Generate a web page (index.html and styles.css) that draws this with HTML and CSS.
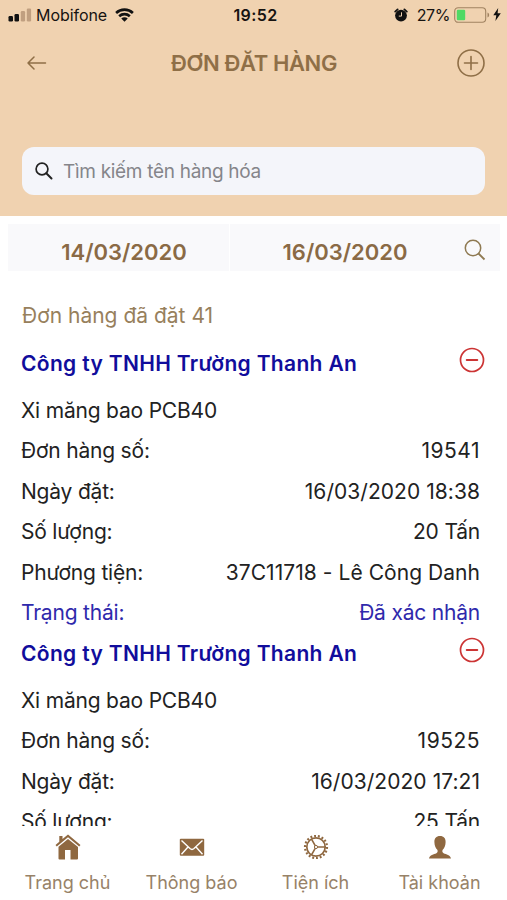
FILE: index.html
```
<!DOCTYPE html>
<html lang="vi">
<head>
    <meta charset="UTF-8">
    <meta name="viewport" content="width=device-width, initial-scale=1.0">
    <title>Đơn đặt hàng</title>
    <link rel="stylesheet" href="styles.css">
</head>
<body>
    <header class="header">
        <div class="statusBar">
            <div class="statusLeft">
                <svg class="signal" width="24" height="14" viewBox="0 0 24 14">
                    <rect x="0.5" y="8" width="4.5" height="5.5" rx="1.2" fill="#111"/>
                    <rect x="6.5" y="6" width="4.5" height="7.5" rx="1.2" fill="#111"/>
                    <rect x="12.8" y="3" width="4.3" height="10.5" rx="1.2" fill="#c09f80"/>
                    <rect x="18.8" y="0.5" width="4.3" height="13" rx="1.2" fill="#c09f80"/>
                </svg>
                <span class="carrier">Mobifone</span>
                <svg class="wifi" width="19" height="14" viewBox="0 0 20 15" fill="none" stroke="#111" stroke-width="2.8">
                    <path d="M1 5.3a13 13 0 0 1 18 0"/>
                    <path d="M4.3 8.8a8.3 8.3 0 0 1 11.4 0"/>
                    <path d="M10 14.8L6.5 11.3a5 5 0 0 1 7 0z" fill="#111" stroke="none"/>
                </svg>
            </div>
            <div class="clock">19:52</div>
            <div class="statusRight">
                <svg width="14" height="14" viewBox="0 0 14 14">
                    <circle cx="7" cy="7.6" r="5.9" fill="#111"/>
                    <path d="M1.2 3.6L3.6 1.4M12.8 3.6L10.4 1.4" stroke="#111" stroke-width="1.8" stroke-linecap="round"/>
                    <path d="M7.5 4.3v3.8H4.8" fill="none" stroke="#f0d2b0" stroke-width="1"/>
                </svg>
                <span class="percent">27%</span>
                <svg class="battery" width="36" height="16" viewBox="0 0 36 16">
                    <rect x="0.7" y="0.7" width="31" height="14.6" rx="3.5" fill="none" stroke="#a08260" stroke-width="1.1"/>
                    <rect x="2.8" y="2.8" width="8.4" height="10.4" rx="1.2" fill="#4fd964"/>
                    <path d="M33.5 5.5c2.2 1 2.2 4 0 5z" fill="#a08260"/>
                </svg>
                <svg width="8" height="13" viewBox="0 0 8 13"><path d="M5.2 0L0.3 7.2h3L2.4 13 7.8 5.3H4.6z" fill="#111"/></svg>
            </div>
        </div>
        <div class="navBar">
            <svg class="back" width="20" height="14" viewBox="0 0 20 14" fill="none" stroke="#8f6f47" stroke-width="1.5" stroke-linecap="round" stroke-linejoin="round">
                <path d="M18.5 7H1M7 1L1 7l6 6"/>
            </svg>
            <h1>ĐƠN ĐĂT HÀNG</h1>
            <svg class="add" width="28" height="28" viewBox="0 0 28 28" fill="none" stroke="#8f6f47" stroke-width="1.6">
                <circle cx="14" cy="14" r="13"/>
                <path d="M14 7.5v13M7.5 14h13" stroke-linecap="round"/>
            </svg>
        </div>
        <div class="searchBox">
            <svg width="18" height="18" viewBox="0 0 18 18" fill="none" stroke="#222" stroke-width="1.7">
                <circle cx="7" cy="7" r="5.9"/>
                <path d="M11.3 11.3l5.2 5.2" stroke-width="2" stroke-linecap="round"/>
            </svg>
            <span>Tìm kiếm tên hàng hóa</span>
        </div>
    </header>

    <div class="dateBar">
        <div class="date">14/03/2020</div>
        <div class="date">16/03/2020</div>
        <div class="dateSearch">
            <svg width="22" height="22" viewBox="0 0 22 22" fill="none" stroke="#8f7a52" stroke-width="1.5">
                <circle cx="9" cy="9" r="7.7"/>
                <path d="M14.5 14.5l6 6" stroke-width="1.8"/>
            </svg>
        </div>
    </div>

    <main class="orders">
        <div class="total">Đơn hàng đã đặt 41</div>

        <section class="order">
            <div class="row company">
                <h2>Công ty TNHH Trường Thanh An</h2>
                <svg class="remove" width="26" height="26" viewBox="0 0 26 26" fill="none" stroke="#cc3434" stroke-width="1.7">
                    <circle cx="13" cy="13" r="11.5"/>
                    <path d="M7.7 13h10.6" stroke-width="1.9" stroke-linecap="round"/>
                </svg>
            </div>
            <div class="row"><span>Xi măng bao PCB40</span></div>
            <div class="row"><span>Đơn hàng số:</span><span class="number">19541</span></div>
            <div class="row"><span>Ngày đặt:</span><span class="value">16/03/2020 18:38</span></div>
            <div class="row"><span>Số lượng:</span><span>20 Tấn</span></div>
            <div class="row"><span>Phương tiện:</span><span class="value">37C11718 - Lê Công Danh</span></div>
            <div class="row status"><span>Trạng thái:</span><span>Đã xác nhận</span></div>
        </section>

        <section class="order">
            <div class="row company">
                <h2>Công ty TNHH Trường Thanh An</h2>
                <svg class="remove" width="26" height="26" viewBox="0 0 26 26" fill="none" stroke="#cc3434" stroke-width="1.7">
                    <circle cx="13" cy="13" r="11.5"/>
                    <path d="M7.7 13h10.6" stroke-width="1.9" stroke-linecap="round"/>
                </svg>
            </div>
            <div class="row"><span>Xi măng bao PCB40</span></div>
            <div class="row"><span>Đơn hàng số:</span><span class="number">19525</span></div>
            <div class="row"><span>Ngày đặt:</span><span class="value">16/03/2020 17:21</span></div>
            <div class="row"><span>Số lượng:</span><span>25 Tấn</span></div>
        </section>
    </main>

    <nav class="tabBar">
        <div class="tab">
            <svg width="26" height="26" viewBox="0 0 26 26" fill="#8f6840">
                <path d="M13 0.5L7.5 5V2H4.3v5.7L0.5 11l1.3 1.5L13 3.3l11.2 9.2 1.3-1.5z"/>
                <path d="M13 5L3.500 12.800V24.500q0 1 1 1H10V16h5.500v9.500H22q1 0 1-1V13z"/>
            </svg>
            <span>Trang chủ</span>
        </div>
        <div class="tab">
            <svg width="26" height="26" viewBox="0 0 26 26">
                <rect x="0.8" y="4.8" width="24.4" height="17" rx="1" fill="#8f6840"/>
                <path d="M2.5 6.5L11 14.6q2 1.8 4 0L23.5 6.5M2.5 20.2L9 13M23.5 20.2L17 13" fill="none" stroke="#fff" stroke-width="1.4"/>
            </svg>
            <span>Thông báo</span>
        </div>
        <div class="tab">
            <svg width="26" height="26" viewBox="0 0 26 26" fill="none" stroke="#8f6840">
                <circle cx="13" cy="13" r="9.2" stroke-width="1.7"/>
                <circle cx="13" cy="13" r="11" stroke-width="2.2" pathLength="72" stroke-dasharray="2 2"/>
                <circle cx="13" cy="13" r="1.6" stroke-width="1"/>
                <path d="M14.5 13H22M12.2 11.7L8.5 5.2M12.2 14.3L8.5 20.8" stroke-width="1.6"/>
            </svg>
            <span>Tiện ích</span>
        </div>
        <div class="tab">
            <svg width="26" height="26" viewBox="0 0 26 26" fill="#8f6840">
                <path d="M13 2c3.8 0 5.8 2.5 5.6 6.2-.1 3.6-1.300 5.800-2.900 7.600-.7 1.400-.4 2.800.9 3.400 2.700 1.200 6.600 1.500 7.400 5.300H2c.8-3.800 4.700-4.100 7.400-5.300 1.300-.6 1.600-2 .9-3.400C8.700 14 7.500 11.800 7.400 8.200 7.200 4.500 9.200 2 13 2z"/>
            </svg>
            <span>Tài khoản</span>
        </div>
    </nav>
</body>
</html>
```
FILE: styles.css
```
* {
  box-sizing: border-box;
}
body {
  margin: 0;
  height: 900px;
  display: flex;
  flex-direction: column;
  overflow: hidden;
  background-color: #fff;
  color: #222;
  font-family: Inter, "Noto Sans", sans-serif;
}
svg {
  display: block;
  flex: none;
}
.header {
  flex: none;
  height: 216px;
  background-color: #f0d2b0;
}
.statusBar {
  display: grid;
  grid-template-columns: 1fr auto 1fr;
  align-items: center;
  height: 29px;
  padding: 0 6px 0 8px;
  font-size: 16px;
  color: #161310;
}
.statusLeft,
.statusRight {
  display: flex;
  align-items: center;
}
.statusRight {
  justify-content: flex-end;
}
.carrier {
  margin: 0 8px 0 4px;
  letter-spacing: -0.05px;
}
.clock {
  padding-left: 2px;
  font-weight: 600;
  letter-spacing: 0.4px;
}
.percent {
  margin: 0 4px 0 9px;
  letter-spacing: -0.4px;
}
.battery {
  margin-right: 3px;
}
.navBar {
  display: flex;
  align-items: center;
  justify-content: space-between;
  height: 68px;
  padding: 0 22px 0 27px;
}
.navBar h1 {
  margin: 0 0 0 4px;
  font-size: 22px;
  font-weight: 600;
  letter-spacing: -0.4px;
  color: #8f6f47;
}
.searchBox {
  display: flex;
  align-items: center;
  gap: 10px;
  height: 48px;
  margin: 50px 22px 0;
  padding: 0 13px;
  border-radius: 12px;
  background-color: #f4f5fa;
  color: #85858a;
  font-size: 19px;
  letter-spacing: -0.3px;
}
.dateBar {
  flex: none;
  display: grid;
  grid-template-columns: 222px 221px 49px;
  height: 47px;
  margin: 8px 7px 0 8px;
  background-color: #f9f9fb;
}
.date {
  display: flex;
  align-items: center;
  justify-content: center;
  padding: 8px 0 0 11px;
  border-right: 1px solid #fff;
  font-size: 22px;
  font-weight: 600;
  color: #8a6a45;
}
.date + .date {
  padding-left: 9px;
  border-right: none;
}
.dateSearch {
  padding: 15px 0 0 13px;
}
.orders {
  flex: none;
  height: 555px;
  overflow: hidden;
  padding: 24px 27px 0 21px;
  font-size: 21px;
}
.total {
  height: 48px;
  padding-left: 1px;
  line-height: 42px;
  color: #97805c;
}
.row {
  display: flex;
  align-items: center;
  justify-content: space-between;
  height: 40.5px;
  letter-spacing: -0.2px;
}
.value {
  letter-spacing: 0.05px;
}
.number {
  letter-spacing: 0.5px;
}
.company {
  margin-bottom: 6.5px;
}
.company h2 {
  margin: 0;
  font-size: 21px;
  font-weight: 600;
  letter-spacing: 0.33px;
  color: #110d9c;
}
.remove {
  margin: -7px -5px 0 0;
}
.status {
  color: #2f29ac;
}
.tabBar {
  flex: none;
  display: grid;
  grid-template-columns: repeat(4, 124px);
  justify-content: center;
  height: 74px;
  padding-top: 8px;
  font-size: 18px;
  color: #978268;
}
.tab {
  display: flex;
  flex-direction: column;
  align-items: center;
  gap: 12px;
}
```
